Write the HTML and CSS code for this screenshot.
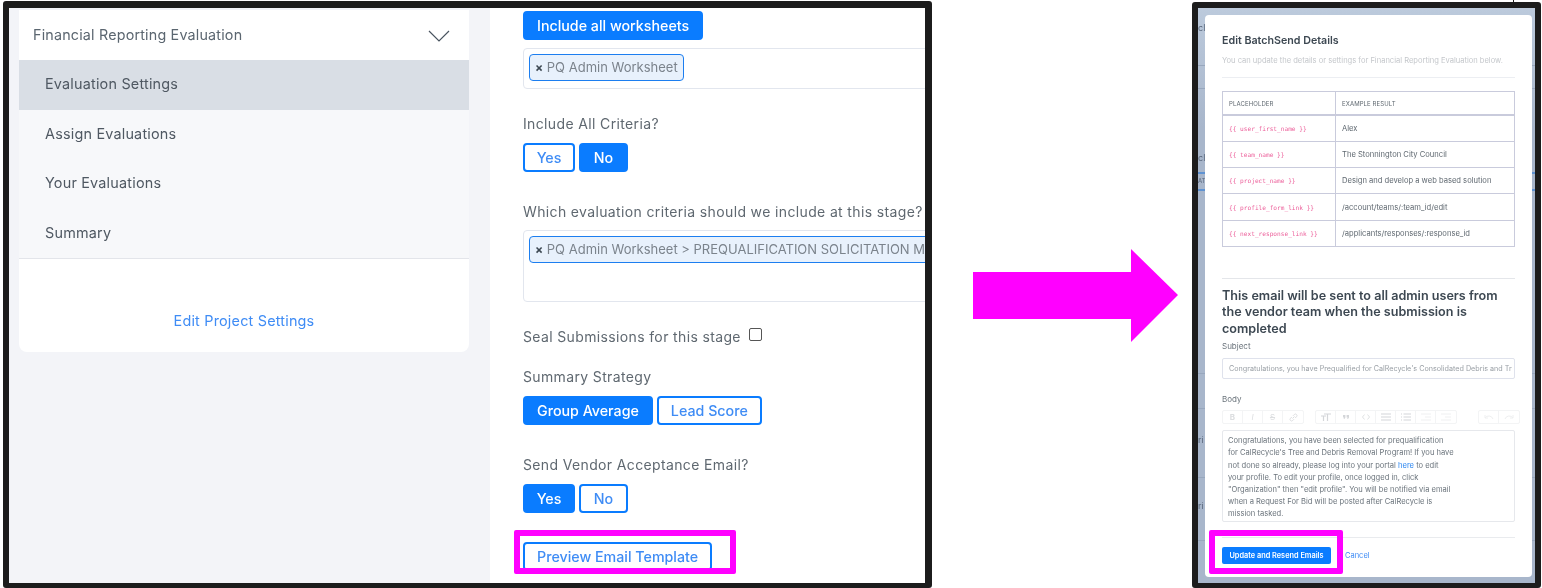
FILE: index.html
```html
<!DOCTYPE html>
<html>
	<head>
		<meta charset="UTF-8">
		<title>Preview Email Template</title>
		<link rel="stylesheet" href="styles.css">
	</head>
	<body>
		<div id="shot1" class="shot">
			<div class="side">
				<div class="card">
					<div class="card-head">
						<span>Financial Reporting Evaluation</span>
						<svg class="chev" width="22" height="12" viewBox="0 0 22 12"><path d="M1 1l10 10L21 1" fill="none" stroke="#4a5560" stroke-width="1.2"/></svg>
					</div>
					<div class="nav">
						<a class="on">Evaluation Settings</a>
						<a>Assign Evaluations</a>
						<a>Your Evaluations</a>
						<a>Summary</a>
					</div>
					<div class="card-foot"><a>Edit Project Settings</a></div>
				</div>
			</div>
			<div class="main">
				<button class="btn fill">Include all worksheets</button>
				<div class="select s1"><span class="tag"><i>×</i> PQ Admin Worksheet</span></div>
				<p class="lab l1">Include All Criteria?</p>
				<div class="btns"><button class="btn yn">Yes</button><button class="btn fill yn2">No</button></div>
				<p class="lab l2">Which evaluation criteria should we include at this stage?</p>
				<div class="select s2"><span class="tag wide"><i>×</i> PQ Admin Worksheet &gt; PREQUALIFICATION SOLICITATION M</span></div>
				<p class="lab l3">Seal Submissions for this stage <span class="check"></span></p>
				<p class="lab l4">Summary Strategy</p>
				<div class="btns"><button class="btn fill">Group Average</button><button class="btn">Lead Score</button></div>
				<p class="lab l5">Send Vendor Acceptance Email?</p>
				<div class="btns"><button class="btn fill yn">Yes</button><button class="btn yn2">No</button></div>
				<button class="btn last">Preview Email Template</button>
			</div>
		</div>

		<svg id="arrow" width="208" height="95" viewBox="0 0 208 95"><path d="M0 23h158V0l47 46-47 47V70H0z" fill="#ff00ff"/></svg>

		<div id="shot2" class="shot">
			<span class="ghost g-a">cl</span>
			<span class="ghost g-b">cl</span>
			<span class="ghost g-c">AT</span>
			<span class="ghost g-d">ri</span>
			<span class="ghost g-e">ri</span>
			<div class="modal">
				<h4>Edit BatchSend Details</h4>
				<p class="sub">You can update the details or settings for Financial Reporting Evaluation below.</p>
				<table>
					<tr class="th"><td>PLACEHOLDER</td><td>EXAMPLE RESULT</td></tr>
					<tr><td><code>{{ user_first_name }}</code></td><td>Alex</td></tr>
					<tr><td><code>{{ team_name }}</code></td><td>The Stonnington City Council</td></tr>
					<tr><td><code>{{ project_name }}</code></td><td>Design and develop a web based solution</td></tr>
					<tr><td><code>{{ profile_form_link }}</code></td><td>/account/teams/:team_id/edit</td></tr>
					<tr><td><code>{{ next_response_link }}</code></td><td>/applicants/responses/:response_id</td></tr>
				</table>
				<h3>This email will be sent to all admin users from the vendor team when the submission is completed</h3>
				<label class="f1">Subject</label>
				<div class="inp">Congratulations, you have Prequalified for CalRecycle's Consolidated Debris and Tr</div>
				<label class="f2">Body</label>
				<div class="tools">
					<div class="tgroup">
						<span><b>B</b></span>
						<span><em>I</em></span>
						<span><s>S</s></span>
						<span><svg width="9" height="9" viewBox="0 0 9 9"><path d="M3.5 5.5l2-2M2.8 4L1.5 5.3a1.5 1.5 0 002.2 2.2L5 6.2M4 2.8l1.3-1.3a1.5 1.5 0 012.2 2.2L6.2 5" fill="none" stroke="#dcdee0"/></svg></span>
					</div>
					<div class="tgroup g2">
						<span><svg width="10" height="8" viewBox="0 0 10 8"><path d="M3 1h7M6.5 1v7M0 3h5M2.5 3v5" fill="none" stroke="#d4d6d9" stroke-width="1.2"/></svg></span>
						<span><svg width="6" height="4" viewBox="0 0 6 4"><path d="M0 0h2.4v2.5L1.4 4H.6l.5-1.5H0zM3.6 0H6v2.5L5 4h-.8l.5-1.5H3.6z" fill="#d4d6d9"/></svg></span>
						<span><svg width="8" height="6" viewBox="0 0 8 6"><path d="M2.5 .5L.5 3l2 2.5M5.5 .5l2 2.5-2 2.5" fill="none" stroke="#d8dadd" stroke-width=".8"/></svg></span>
						<span><svg width="10" height="8" viewBox="0 0 10 8"><path d="M0 1h10M0 4h10M0 7h10" stroke="#d4d6d9" stroke-width="1.2"/></svg></span>
						<span><svg width="10" height="8" viewBox="0 0 10 8"><path d="M2.5 1H10M2.5 4H10M2.5 7H10M0 1h1M0 4h1M0 7h1" stroke="#d4d6d9" stroke-width="1.2"/></svg></span>
						<span><svg width="10" height="8" viewBox="0 0 10 8"><path d="M0 1h10M4 4h6M0 7h10" stroke="#eff0f1"/></svg></span>
						<span><svg width="10" height="8" viewBox="0 0 10 8"><path d="M0 1h10M4 4h6M0 7h10" stroke="#eff0f1"/></svg></span>
					</div>
					<div class="tgroup g3">
						<span><svg width="10" height="6" viewBox="0 0 10 6"><path d="M1 4a4.5 4.5 0 018 1M1 1v3h3" fill="none" stroke="#eeeff0"/></svg></span>
						<span><svg width="10" height="6" viewBox="0 0 10 6"><path d="M9 4a4.5 4.5 0 00-8 1M9 1v3H6" fill="none" stroke="#eeeff0"/></svg></span>
					</div>
				</div>
				<div class="editor">Congratulations, you have been selected for prequalification<br>for CalRecycle's Tree and Debris Removal Program! If you have<br>not done so already, please log into your portal <a>here</a> to edit<br>your profile. To edit your profile, once logged in, click<br>"Organization" then "edit profile". You will be notified via email<br>when a Request For Bid will be posted after CalRecycle is<br>mission tasked.</div>
				<div class="foot"><button class="send">Update and Resend Emails</button><a>Cancel</a></div>
			</div>
		</div>

		<div id="mark1" class="mark"></div>
		<div id="mark2" class="mark"></div>
		<div id="tick"></div>
	</body>
</html>
```

FILE: styles.css
```css
*{margin: 0;padding: 0;box-sizing: border-box;}
html,body{height: 100%;}
body{background: #fff;font-family: Inter,"Liberation Sans",sans-serif;position: relative;overflow: hidden;}
button{font-family: inherit;}

/* the two pasted screenshots sit on a free canvas */
.shot{
	position: absolute;
	overflow: hidden;
	border: 6px solid #1c1c1c;
	border-radius: 3px;
	filter: blur(0.35px);
}
#shot1{
	left: 3px;
	top: 1px;
	width: 929px;
	height: 587px;
	border-width: 7px 7px 5px 6px;
	display: flex;
	background: #fff;
}
#shot2{
	left: 1192px;
	top: 2px;
	width: 349px;
	height: 586px;
	border-width: 6px 6px 5px 6px;
	padding: 7px 3px 0 7px;
	background-color: #a8b6cb;
	background-image:
		linear-gradient(#98a7bd,#98a7bd),
		linear-gradient(#98a7bd,#98a7bd),
		linear-gradient(#5f93d2,#5f93d2),
		linear-gradient(#5f93d2,#5f93d2),
		linear-gradient(#98a7bd,#98a7bd),
		linear-gradient(#98a7bd,#98a7bd),
		linear-gradient(#98a7bd,#98a7bd),
		linear-gradient(#98a7bd,#98a7bd),
		linear-gradient(#bccadc,#a8b6cb 120px);
	background-size: 100% 1px,100% 1px,100% 2px,100% 2px,100% 1px,100% 1px,100% 1px,100% 1px,100% 100%;
	background-position: 0 57px,0 80px,0 164px,0 181px,0 365px,0 400px,0 469px,0 532px,0 0;
	background-repeat: no-repeat;
}
.ghost{position: absolute;left: 0;font-size: 9px;line-height: 10px;color: #59677c;}
.g-a{top: 15px;}
.g-b{top: 145px;}
.g-c{top: 168px;font-size: 6px;}
.g-d{top: 427px;}
.g-e{top: 493px;}
#arrow{position: absolute;left: 973px;top: 249px;}
.mark{position: absolute;border: 6px solid #f0f;border-radius: 2px;}
#mark1{left: 514px;top: 530px;width: 222px;height: 44px;}
#mark2{left: 1209px;top: 530px;width: 134px;height: 44px;}
#tick{position: absolute;left: 1513px;top: 0;width: 1px;height: 3px;background: #1c1c1c;}

/* left panel */
.side{width: 481px;flex: none;background: #f3f4f8;padding: 2px 21px 0 10px;}
.card{height: 342px;background: #fff;border-radius: 0 0 8px 8px;overflow: hidden;}
.card-head{
	height: 50px;
	padding: 0 19px 2px 14px;
	display: flex;
	align-items: center;
	justify-content: space-between;
	font-size: 14.3px;
	color: #5b6670;
	letter-spacing: 0.2px;
}
.chev{margin-top: 4px;}
.nav{background: #f7f8fa;border-bottom: 1px solid #e3e5ea;}
.nav a{
	display: block;
	height: 49.5px;
	line-height: 48px;
	padding-left: 26px;
	font-size: 14.4px;
	color: #4f5862;
	letter-spacing: 0.2px;
}
.nav a.on{background: #d9dee5;}
.card-foot{text-align: center;padding-top: 51px;}
.card-foot a{font-size: 14.4px;color: #3f8cf5;letter-spacing: 0.2px;}

.main{flex: 1;min-width: 0;padding: 3px 0 0 33px;overflow: hidden;position: relative;}
.btn{
	height: 29px;
	padding: 0 12px;
	border: 2px solid #0a7cff;
	border-radius: 4px;
	background: #fff;
	color: #3f8cf5;
	font-size: 14.25px;
	font-weight: 500;
	white-space: nowrap;
	display: block;
}
.btn.fill{background: #0a7cff;color: #fff;}
.btn.yn{width: 52px;padding: 0;}
.btn.yn2{width: 49px;padding: 0;}
.btns{display: flex;gap: 4px;}
.select{
	margin-top: 8px;
	margin-right: -20px;
	padding: 5px;
	border: 1px solid #e2e6ee;
	border-radius: 4px;
}
.s1{height: 41px;}
.s2{height: 72px;margin-top: 9px;}
.tag{
	display: inline-block;
	height: 27px;
	line-height: 25px;
	padding: 0 5px;
	background: #e8f1fc;
	border: 1px solid #1c7ef0;
	border-radius: 4px;
	font-size: 13px;
	color: #7b838c;
	white-space: nowrap;
}
.tag i{font-style: normal;font-weight: 700;color: #3d4852;font-size: 12px;}
.tag.wide{display: block;overflow: hidden;margin-right: -20px;}
.lab{font-size: 14px;line-height: 18px;color: #5f6870;letter-spacing: 0.36px;white-space: nowrap;}
.l1{margin-top: 26px;margin-bottom: 10px;}
.l2{margin-top: 31px;}
.l3{margin-top: 26px;}
.l4{margin-top: 22px;margin-bottom: 10px;}
.l5{margin-top: 31px;margin-bottom: 10px;}
.check{
	display: inline-block;
	width: 13px;
	height: 13px;
	margin-left: 4px;
	border: 1px solid #555;
	border-radius: 2px;
	vertical-align: 1px;
	background: #fff;
}
.last{margin-top: 29px;}

/* modal */
.modal{
	position: relative;
	width: 327px;
	height: 562px;
	background: #fff;
	border-radius: 4px;
	padding: 19px 17px 0;
	font-size: 8px;
	color: #5f6870;
}
h4{font-size: 10.7px;line-height: 13px;font-weight: 600;color: #3d4852;}
.sub{font-size: 7.55px;line-height: 10px;margin-top: 9px;padding-bottom: 11px;border-bottom: 1px solid #eceef2;color: #c4c7cb;white-space: nowrap;}
table{border-collapse: collapse;width: 293px;margin-top: 13px;table-layout: fixed;}
td{height: 26.3px;padding: 0 6px;border: 1px solid #c9cbdc;font-size: 7.6px;white-space: nowrap;color: #5f6870;vertical-align: middle;}
td:first-child{width: 113px;}
.th td{height: 23.5px;font-size: 6px;letter-spacing: 0.1px;color: #5f6870;border-bottom-width: 2px;}
code{font-family: "DejaVu Sans Mono","Liberation Mono",monospace;font-size: 6.15px;color: #ec5f9a;}
h3{
	margin-top: 31px;
	padding-top: 9px;
	border-top: 1px solid #e4e6ea;
	font-size: 12.6px;
	line-height: 16.4px;
	font-weight: 600;
	color: #3d4852;
}
label{display: block;font-size: 8px;line-height: 10px;color: #6a737b;}
.f1{margin-top: 4px;}
.inp{
	margin-top: 7px;
	height: 21px;
	line-height: 19px;
	padding: 0 6px;
	font-size: 7.2px;
	border: 1px solid #dfe2ec;
	border-radius: 2px;
	color: #9aa0a6;
	white-space: nowrap;
	overflow: hidden;
}
.f2{margin-top: 15px;}
.tools{display: flex;margin-top: 6px;height: 14px;color: #dcdee0;font-size: 8px;}
.tgroup{display: flex;border: 1px solid #f3f4f5;border-radius: 2px;margin-right: 11px;}
.tgroup>span{width: 20px;display: flex;align-items: center;justify-content: center;border-right: 1px solid #f3f4f5;}
.tgroup>span:last-child{border-right: 0;}
.g3{margin: 0 0 0 10px;}
.editor{
	margin-top: 6px;
	height: 92px;
	padding: 4px 5px;
	border: 1px solid #e6e8ec;
	border-radius: 2px;
	font-size: 7.57px;
	line-height: 12.2px;
	color: #6a737b;
	white-space: nowrap;
}
.editor a{color: #2c86f0;}
.foot{
	margin-top: 15px;
	padding-top: 9px;
	border-top: 1px solid #e9ebee;
	display: flex;
	align-items: center;
	gap: 14px;
}
.foot a{color: #3f8cf5;font-size: 7.5px;}
.send{
	width: 109px;
	height: 17px;
	background: #0a7cff;
	border: 0;
	border-radius: 2px;
	color: #fff;
	font-size: 7.35px;
	font-weight: 600;
	white-space: nowrap;
}
```
